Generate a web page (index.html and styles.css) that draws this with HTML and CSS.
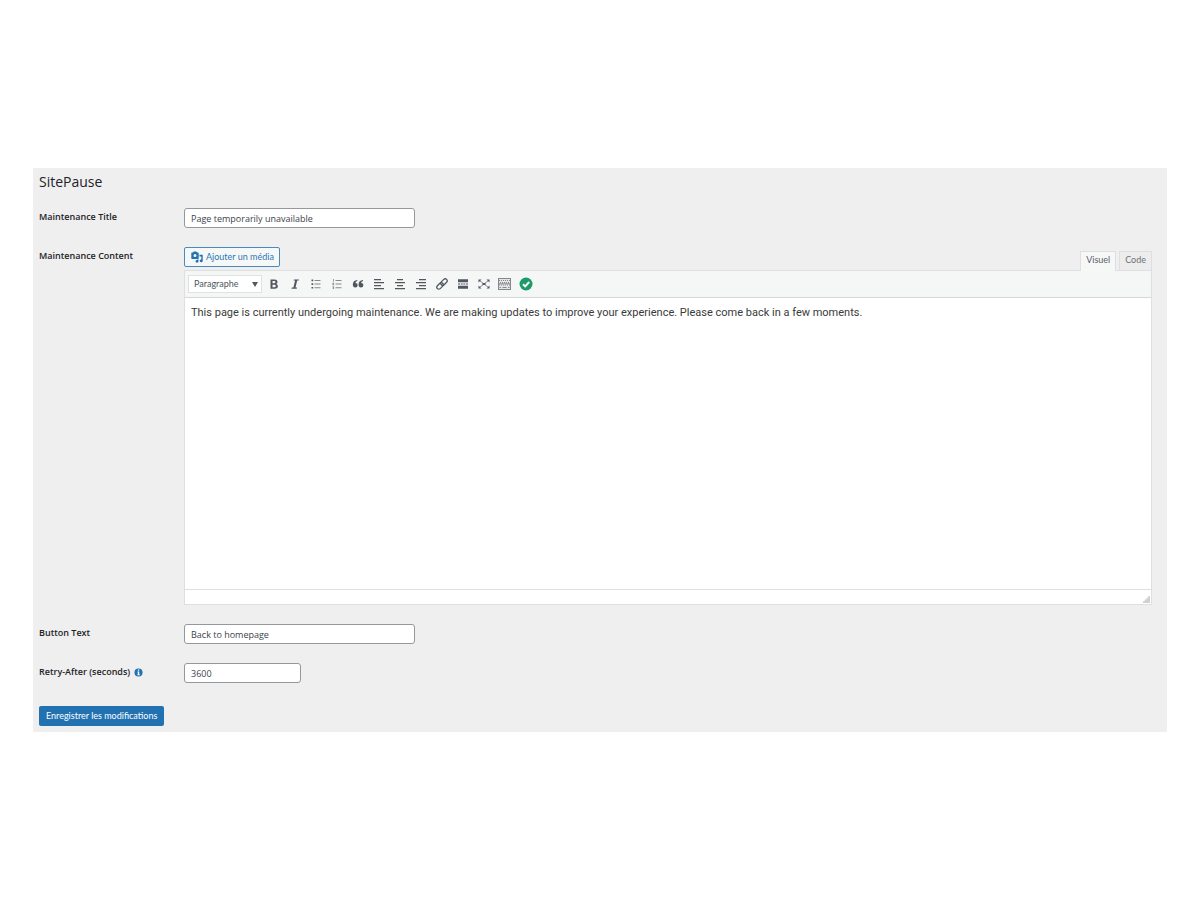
FILE: index.html
```html
<!DOCTYPE html>
<html lang="fr">
<head>
<meta charset="utf-8">
<meta name="viewport" content="width=device-width, initial-scale=1">
<title>SitePause</title>
<link rel="stylesheet" href="styles.css">
</head>
<body>
<main class="panel">
  <h1 class="title">SitePause</h1>
  <form class="form">
    <div class="row">
      <label class="label" for="mtitle">Maintenance Title</label>
      <input class="field" id="mtitle" type="text" value="Page temporarily unavailable">
    </div>
    <div class="row row-editor">
      <label class="label" for="content">Maintenance Content</label>
      <div class="editor-wrap">
        <div class="editor-tools">
          <button class="media" type="button">
            <svg class="media-icon" viewBox="0 0 12 12" aria-hidden="true"><path fill-rule="evenodd" d="M1 1.500h1L2.600.5h2.800l.6 1h1q.7 0 .7.7v5q0 .7-.7.7H1q-.7 0-.7-.7v-5q0-.7.7-.7zM4 3a1.500 1.500 0 1 0 0 3a1.500 1.500 0 1 0 0-3z"/><path d="M8.500 3.800h3.200v6.100a1.500 1.400 0 1 1-1.400-1.400V5.500H8.500zM6 8.500h1.500v1.800a1.500 1.400 0 1 1-1.500-1.400z"/></svg>
            Ajouter un média</button>
          <div class="tabs">
            <button class="tab active" type="button">Visuel</button>
            <button class="tab" type="button">Code</button>
          </div>
        </div>
        <div class="editor">
          <div class="toolbar">
            <div class="format">
              <select class="select" aria-label="Format"><option>Paragraphe</option></select>
              <svg class="caret" viewBox="0 0 6 5" aria-hidden="true"><path d="M0 0h6L3 5z"/></svg>
            </div>
            <button class="tool" type="button" aria-label="Gras"><svg viewBox="0 0 12 12"><path fill-rule="evenodd" d="M2.500 1.500h4q3 0 3 2.500 0 1.400-1.300 1.900 1.700.4 1.700 2.100 0 2.700-3.300 2.700H2.500zM4.500 3v2.200h1.700q1.300 0 1.300-1.100T6.200 3zm0 3.700v2.500h1.900q1.400 0 1.400-1.300T6.400 6.700z"/></svg></button>
            <button class="tool" type="button" aria-label="Italique"><svg viewBox="0 0 12 12"><path d="M5 1.500h5L9.700 2.600H8.200L6.500 9.600H8L7.700 10.700H2.500L2.800 9.600h1.600L6.100 2.600H4.600z"/></svg></button>
            <button class="tool" type="button" aria-label="Liste à puces"><svg viewBox="0 0 12 12"><path d="M1.500 1.500h1.700v1.700H1.500zm0 3.700h1.700v1.700H1.500zm0 3.700h1.700v1.700H1.500z"/><path class="soft" d="M4.500 2h6v1h-6zm0 3.600h6v1h-6zm0 3.700h6v1h-6z"/></svg></button>
            <button class="tool" type="button" aria-label="Liste numérotée"><svg viewBox="0 0 12 12"><path class="soft" d="M4.500 2h6v1h-6zm0 3.600h6v1h-6zm0 3.700h6v1h-6zM2 1h.8v2.700H2zM1.400 4.800h1.700v1.500H2.200v.3h.9v.6H1.400V5.800h.9v-.4h-.9zM1.400 8.200h1.700V11H1.400v-.6h.9v-.5h-.9v-.5h.9v-.6h-.9z"/></svg></button>
            <button class="tool" type="button" aria-label="Citation"><svg viewBox="0 0 12 12"><path d="M5.300 2v1Q3.500 3.400 3.400 5.100 5.700 5 5.700 7.200 5.600 9.500 3.300 9.500.8 9.400.8 6.500.9 2.400 5.300 2zM11 2v1Q9.200 3.400 9.100 5.100q2.300-.1 2.300 2.100-.1 2.300-2.400 2.300-2.500-.1-2.500-3Q6.600 2.400 11 2z"/></svg></button>
            <button class="tool" type="button" aria-label="Aligner à gauche"><svg viewBox="0 0 12 12"><path d="M1 1h7v1.300H1zm0 3h10v1.300H1zm0 3h7v1.300H1zm0 3h10v1.300H1z"/></svg></button>
            <button class="tool" type="button" aria-label="Centrer"><svg viewBox="0 0 12 12"><path d="M3 1h6v1.300H3zM1 4h10v1.300H1zm2 3h6v1.300H3zm-2 3h10v1.300H1z"/></svg></button>
            <button class="tool" type="button" aria-label="Aligner à droite"><svg viewBox="0 0 12 12"><path d="M4 1h7v1.300H4zM1 4h10v1.300H1zm3 3h7v1.300H4zm-3 3h10v1.300H1z"/></svg></button>
            <button class="tool" type="button" aria-label="Lien"><svg viewBox="0 0 12 12"><g class="line" transform="rotate(-45 6 6)"><rect x="-.5" y="4" width="7.500" height="4" rx="2"/><rect x="5" y="4" width="7.500" height="4" rx="2"/></g></svg></button>
            <button class="tool" type="button" aria-label="Lire la suite"><svg viewBox="0 0 12 12"><path d="M1 1.200h10v3H1zM1 5.500h2v1H1zm2.700 0h2v1h-2zm2.600 0h2v1h-2zM9 5.500h2v1H9zM1 7.800h10v3H1z"/></svg></button>
            <button class="tool" type="button" aria-label="Plein écran"><svg viewBox="0 0 12 12"><path d="M.5 1.500h3L.5 4.500zM11.500 1.500h-3l3 3zM.5 10.500h3l-3-3zM11.500 10.500h-3l3-3zM4.500 5h3v2h-3z"/><path class="thin" d="M1.500 2.500l9 7M10.500 2.500l-9 7"/></svg></button>
            <button class="tool" type="button" aria-label="Ouvrir la barre d'outils"><svg class="keys" viewBox="0 0 13 12"><rect x=".5" y=".5" width="12" height="11"/><path d="M1 2.500h11M2 4.500h10M1 7h11" stroke-dasharray="1 1"/><path d="M1 5.800h11M1.500 9.500H3M4.500 9.500h4M10 9.500h1.500"/></svg></button>
            <button class="tool" type="button" aria-label="Vérifié"><svg class="check" viewBox="0 0 14 14"><circle cx="7" cy="7" r="6.500"/><path d="M4 7.200l2.200 2.200L10.200 5"/></svg></button>
          </div>
          <textarea class="content" id="content">This page is currently undergoing maintenance. We are making updates to improve your experience. Please come back in a few moments.</textarea>
          <div class="status"><svg class="grip" viewBox="0 0 8 8" aria-hidden="true"><path d="M6 0h2v8H0V6h2V4h2V2h2z"/></svg></div>
        </div>
      </div>
    </div>
    <div class="row">
      <label class="label" for="btext">Button Text</label>
      <input class="field" id="btext" type="text" value="Back to homepage">
    </div>
    <div class="row">
      <label class="label" for="retry">Retry-After (seconds)
        <svg class="info" viewBox="0 0 10 10" aria-hidden="true"><circle cx="5" cy="5" r="4.500"/><path d="M4.300 1.800h1.500v1.300H4.300zM3.800 4h2v3h.6v1H3.700V7h.6V5h-.5z"/></svg></label>
      <input class="field field-small" id="retry" type="text" inputmode="numeric" value="3600">
    </div>
    <button class="save" type="submit">Enregistrer les modifications</button>
  </form>
</main>
</body>
</html>
```
FILE: styles.css
```css
* { box-sizing: border-box; }

body {
  margin: 0;
  min-height: 100vh;
  padding: 0 33px;
  display: flex;
  align-items: center;
  background: #fff;
  color: #1d2327;
  font: 9px/12px "Open Sans", "Noto Sans", sans-serif;
}

button, input, select { font: inherit; margin: 0; }

button, select { font-family: Lato, "Open Sans", sans-serif; }

.panel {
  flex: 1;
  min-width: 0;
  padding: 4px 15px 6px 6px;
  background: #efefef;
}

.title {
  margin: 0 0 16px;
  font-size: 14px;
  font-weight: 400;
  line-height: 20px;
}

.form {
  display: flex;
  flex-direction: column;
  gap: 19px;
}

.row {
  display: grid;
  grid-template-columns: 145px minmax(0, 1fr);
  align-items: start;
}

.label {
  display: flex;
  align-items: center;
  gap: 4px;
  padding-top: 3px;
  font-weight: 600;
}

.info { width: 9px; height: 9px; fill: #2271b1; }
.info path { fill: #fff; }

.field {
  width: 100%;
  max-width: 231px;
  height: 20px;
  padding: 0 6px;
  border: 1px solid #95979b;
  border-radius: 3px;
  background: #fff;
  color: #3c434a;
}

.field-small { max-width: 117px; }

.editor-tools {
  display: flex;
  justify-content: space-between;
  align-items: flex-start;
}

.media {
  display: flex;
  align-items: center;
  gap: 3px;
  height: 20px;
  padding: 0 5px 0 6px;
  border: 1px solid #4a8abf;
  border-radius: 2px;
  background: #f6f7f7;
  color: #2d78b5;
}

.media-icon { width: 12px; height: 12px; fill: #2271b1; }

.tabs {
  display: flex;
  gap: 3px;
  padding-top: 4px;
}

.tab {
  height: 19px;
  padding: 0 5px 2px;
  border: 1px solid #dedfe1;
  border-bottom: 0;
  background: #ededed;
  color: #6c7075;
}

.active {
  position: relative;
  z-index: 1;
  margin-bottom: -1px;
  height: 20px;
  padding-bottom: 3px;
  background: #f6f7f7;
  color: #595e64;
}

.editor {
  border: 1px solid #dedfe1;
  background: #fff;
}

.toolbar {
  display: flex;
  flex-wrap: wrap;
  align-items: center;
  min-height: 27px;
  padding: 0 3px;
  border-bottom: 1px solid #d6d7d9;
  background: #f5f7f7;
}

.format {
  position: relative;
  width: 74px;
  margin-right: 1px;
}

.select {
  appearance: none;
  display: block;
  width: 100%;
  height: 18px;
  padding: 0 5px;
  border: 1px solid #e0e1e3;
  border-radius: 0;
  background: #fff;
  color: #50575e;
}

.caret {
  position: absolute;
  right: 4px;
  top: 7px;
  width: 6px;
  height: 5px;
  fill: #50575e;
}

.tool {
  display: flex;
  align-items: center;
  justify-content: center;
  width: 21px;
  height: 20px;
  padding: 0;
  border: 0;
  background: none;
}

.tool svg { width: 12px; height: 12px; fill: #50575e; }
.tool .soft { fill: #858a8f; }
.line { fill: none; stroke: #50575e; stroke-width: 1.3; }
.thin { fill: none; stroke: #50575e; stroke-width: 0.7; }
.tool .keys { width: 13px; fill: #e3e5e6; stroke: #85898d; stroke-width: 1; }
.tool .check { width: 14px; height: 14px; fill: #1a9b67; }
.check path { fill: none; stroke: #fff; stroke-width: 2; }

.content {
  display: block;
  width: 100%;
  height: 291px;
  padding: 7px 6px;
  border: 0;
  resize: none;
  background: #fff;
  color: #3a3a3a;
  font: 11px/15px Roboto, sans-serif;
}

.status {
  display: flex;
  justify-content: flex-end;
  align-items: flex-end;
  height: 15px;
  padding: 1px;
  border-top: 1px solid #dedfe1;
}

.grip { width: 7px; height: 7px; fill: #d0d0d0; }

.save {
  align-self: flex-start;
  height: 20px;
  margin-top: 4px;
  padding: 0 7px;
  border: 0;
  border-radius: 2px;
  background: #2271b1;
  color: #fff;
}
```
